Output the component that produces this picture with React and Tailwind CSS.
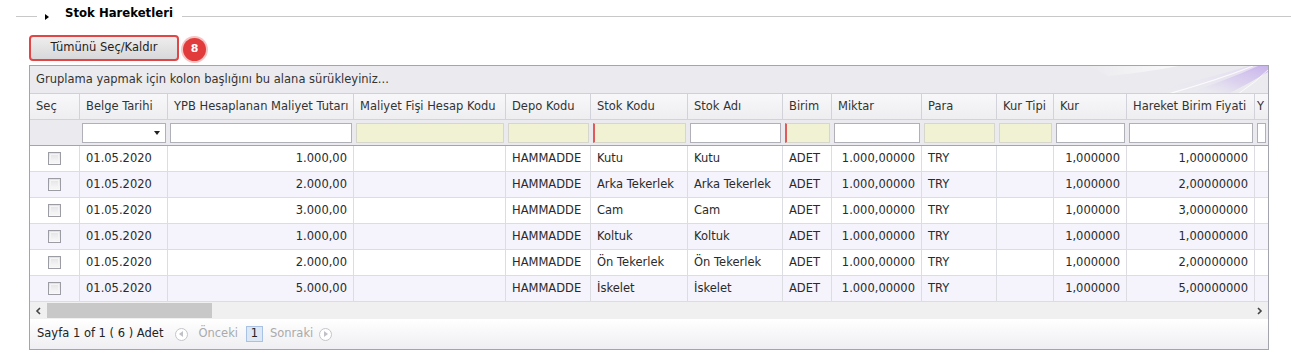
import React from "react";

const cols = [
  { label: "Seç", w: "w-[50px]" },
  { label: "Belge Tarihi", w: "w-[88px]" },
  { label: "YPB Hesaplanan Maliyet Tutarı", w: "w-[186px]", right: true },
  { label: "Maliyet Fişi Hesap Kodu", w: "w-[152px]" },
  { label: "Depo Kodu", w: "w-[85px]" },
  { label: "Stok Kodu", w: "w-[97px]" },
  { label: "Stok Adı", w: "w-[95px]" },
  { label: "Birim", w: "w-[49px]" },
  { label: "Miktar", w: "w-[90px]", right: true },
  { label: "Para", w: "w-[75px]" },
  { label: "Kur Tipi", w: "w-[57px]" },
  { label: "Kur", w: "w-[73px]", right: true },
  { label: "Hareket Birim Fiyati", w: "w-[128px]", right: true },
  { label: "Y", w: "flex-1 min-w-0", last: true },
];

const filters = [
  "none",
  "select",
  "white",
  "beige",
  "beige",
  "beigeRed",
  "white",
  "beigeRed",
  "white",
  "beige",
  "beige",
  "white",
  "white",
  "white",
];

const rows = [
  ["1.000,00", "Kutu", "1,00000000"],
  ["2.000,00", "Arka Tekerlek", "2,00000000"],
  ["3.000,00", "Cam", "3,00000000"],
  ["1.000,00", "Koltuk", "1,00000000"],
  ["2.000,00", "Ön Tekerlek", "2,00000000"],
  ["5.000,00", "İskelet", "5,00000000"],
];

function Checkbox() {
  return (
    <div className="w-[13px] h-[13px] border border-[#9c9ca4] bg-gradient-to-b from-[#e2e2e6] to-[#fafafa] p-px">
      <div className="w-full h-full border border-[#f4f4f4]" />
    </div>
  );
}

function FilterCell({ kind }) {
  if (kind === "none") return null;
  if (kind === "select")
    return (
      <div className="h-[20px] w-full border border-[#b0b0b8] bg-white flex items-center justify-end pr-[5px]">
        <div className="w-0 h-0 border-x-[3px] border-x-transparent border-t-[4px] border-t-[#222]" />
      </div>
    );
  if (kind === "white")
    return <div className="h-[20px] w-full border border-[#b0b0b8] bg-white" />;
  if (kind === "beige")
    return <div className="h-[20px] w-full border border-[#d6d6cc] bg-[#f1f1d4]" />;
  return (
    <div className="h-[20px] w-full border border-[#d6d6cc] border-l-2 border-l-[#e05a5a] bg-[#f1f1d4]" />
  );
}

function CircleArrow({ dir }) {
  return (
    <div className="w-[13px] h-[13px] rounded-full border border-[#c4c4cc] bg-white flex items-center justify-center">
      {dir === "left" ? (
        <div className="w-0 h-0 border-y-[3px] border-y-transparent border-r-[4px] border-r-[#c0c0c8] mr-px" />
      ) : (
        <div className="w-0 h-0 border-y-[3px] border-y-transparent border-l-[4px] border-l-[#c0c0c8] ml-px" />
      )}
    </div>
  );
}

function Chevron({ dir }) {
  return (
    <svg width="7" height="8" viewBox="0 0 7 8">
      {dir === "left" ? (
        <path d="M5 1 L2 4 L5 7" stroke="#444" strokeWidth="1.6" fill="none" />
      ) : (
        <path d="M2 1 L5 4 L2 7" stroke="#444" strokeWidth="1.6" fill="none" />
      )}
    </svg>
  );
}

export default function App() {
  return (
    <div className="w-[1291px] h-[359px] bg-white font-['DejaVu_Sans',sans-serif] text-[11.5px] text-[#333] overflow-hidden">
      {/* Legend */}
      <div className="flex items-center h-[20px] mt-[6px]">
        <div className="ml-[16px] w-[21px] h-px bg-[#c8c8c8]" />
        <div className="ml-[8px] mt-px w-0 h-0 border-y-[3px] border-y-transparent border-l-[4px] border-l-black" />
        <span className="ml-[16px] -translate-y-[2px] font-bold text-[11.7px] text-black">
          Stok Hareketleri
        </span>
        <div className="ml-[9px] flex-1 h-px bg-[#c8c8c8]" />
      </div>

      {/* Button row */}
      <div className="flex items-center mt-[9px] ml-[29px] h-[26px]">
        <button className="w-[150px] h-[26px] border-2 border-[#e04646] rounded-[4px] bg-gradient-to-b from-[#eeeeee] to-[#d8d8da] text-[#1e1e1e] flex items-center justify-center">
          Tümünü Seç/Kaldır
        </button>
        <div className="ml-[4px] mt-[3px] w-[23px] h-[23px] rounded-full bg-[#e23b3b] ring-2 ring-[#f7c4c4] text-white font-bold text-[11px] flex items-center justify-center">
          8
        </div>
      </div>

      {/* Grid */}
      <div className="mt-[4px] ml-[29px] w-[1240px] border border-[#a4a4ae] overflow-hidden">
        {/* Group panel */}
        <div className="relative h-[28px] bg-[#ebebef] border-b border-[#d0d0d8] flex items-center pl-[6px] overflow-hidden">
          <span>Gruplama yapmak için kolon başlığını bu alana sürükleyiniz...</span>
          <svg className="absolute right-0 top-0" width="180" height="28" viewBox="0 0 180 28">
            <defs>
              <linearGradient id="sw1" x1="0" y1="1" x2="1" y2="0">
                <stop offset="0" stopColor="#ebebef" stopOpacity="0" />
                <stop offset="0.5" stopColor="#d3c4ee" stopOpacity="0.6" />
                <stop offset="1" stopColor="#c2aaea" stopOpacity="0.85" />
              </linearGradient>
              <linearGradient id="sw2" x1="0" y1="1" x2="1" y2="0">
                <stop offset="0" stopColor="#ebebef" stopOpacity="0" />
                <stop offset="1" stopColor="#e2d6f3" stopOpacity="0.8" />
              </linearGradient>
              <linearGradient id="sw3" x1="0" y1="0" x2="1" y2="0">
                <stop offset="0" stopColor="#ffffff" stopOpacity="0" />
                <stop offset="1" stopColor="#ffffff" stopOpacity="0.7" />
              </linearGradient>
            </defs>
            <path d="M0 0 L90 0 Q60 6 20 10 Z" fill="url(#sw3)" />
            <path d="M40 28 Q110 16 160 0 L176 0 Q130 18 90 28 Z" fill="url(#sw2)" />
            <path d="M95 28 Q140 14 170 0 L180 0 L180 6 Q160 18 140 28 Z" fill="url(#sw1)" />
            <path d="M80 28 Q130 14 165 0" stroke="#ffffff" strokeOpacity="0.8" strokeWidth="1.2" fill="none" />
            <path d="M150 28 Q168 16 180 4" stroke="#ffffff" strokeOpacity="0.8" strokeWidth="1" fill="none" />
          </svg>
        </div>

        {/* Header */}
        <div className="flex h-[26px] bg-gradient-to-b from-[#f8f8fa] to-[#eeeef1] border-b border-[#d2d2da]">
          {cols.map((c, i) => (
            <div
              key={i}
              className={`${c.w} shrink-0 h-full ${c.last ? "pl-[2px]" : "border-r border-[#d2d2da] px-[6px]"} flex items-center whitespace-nowrap overflow-hidden`}
            >
              {c.label}
            </div>
          ))}
        </div>

        {/* Filter row */}
        <div className="flex h-[26px] bg-[#ebebef] border-b border-[#a4a4b0]">
          {cols.map((c, i) => (
            <div key={i} className={`${c.w} shrink-0 h-full px-[2px] flex items-center overflow-hidden`}>
              <FilterCell kind={filters[i]} />
            </div>
          ))}
        </div>

        {/* Data rows */}
        {rows.map((r, ri) => {
          const vals = [
            null,
            "01.05.2020",
            r[0],
            "",
            "HAMMADDE",
            r[1],
            r[1],
            "ADET",
            "1.000,00000",
            "TRY",
            "",
            "1,000000",
            r[2],
            "",
          ];
          return (
            <div
              key={ri}
              className={`flex h-[26px] border-b border-[#dcdce3] ${ri % 2 === 1 ? "bg-[#f5f3fb]" : "bg-white"}`}
            >
              {cols.map((c, i) => (
                <div
                  key={i}
                  className={`${c.w} shrink-0 h-full ${c.last ? "" : "border-r border-[#dcdce3]"} px-[6px] flex items-center whitespace-nowrap overflow-hidden text-[#2a2a2a] ${
                    i === 0 ? "justify-center" : c.right ? "justify-end" : ""
                  }`}
                >
                  {i === 0 ? <Checkbox /> : vals[i]}
                </div>
              ))}
            </div>
          );
        })}

        {/* Horizontal scrollbar */}
        <div className="flex items-center h-[17px] bg-[#f0f0f0]">
          <div className="w-[17px] h-full flex items-center justify-center">
            <Chevron dir="left" />
          </div>
          <div className="w-[165px] h-[15px] bg-[#c8c8c8]" />
          <div className="ml-auto w-[17px] h-full flex items-center justify-center">
            <Chevron dir="right" />
          </div>
        </div>

        {/* Pager */}
        <div className="flex items-center h-[30px] bg-gradient-to-b from-white to-[#efeff3] pl-[7px]">
          <span className="text-[#222]">Sayfa 1 of 1 ( 6 ) Adet</span>
          <div className="ml-[12px]">
            <CircleArrow dir="left" />
          </div>
          <span className="ml-[10px] text-[#aaa]">Önceki</span>
          <div className="ml-[8px] w-[17px] h-[16px] border border-[#a9c2e4] bg-[#dde8f7] flex items-center justify-center text-[#222]">
            1
          </div>
          <span className="ml-[7px] text-[#aaa]">Sonraki</span>
          <div className="ml-[6px]">
            <CircleArrow dir="right" />
          </div>
        </div>
      </div>
    </div>
  );
}
